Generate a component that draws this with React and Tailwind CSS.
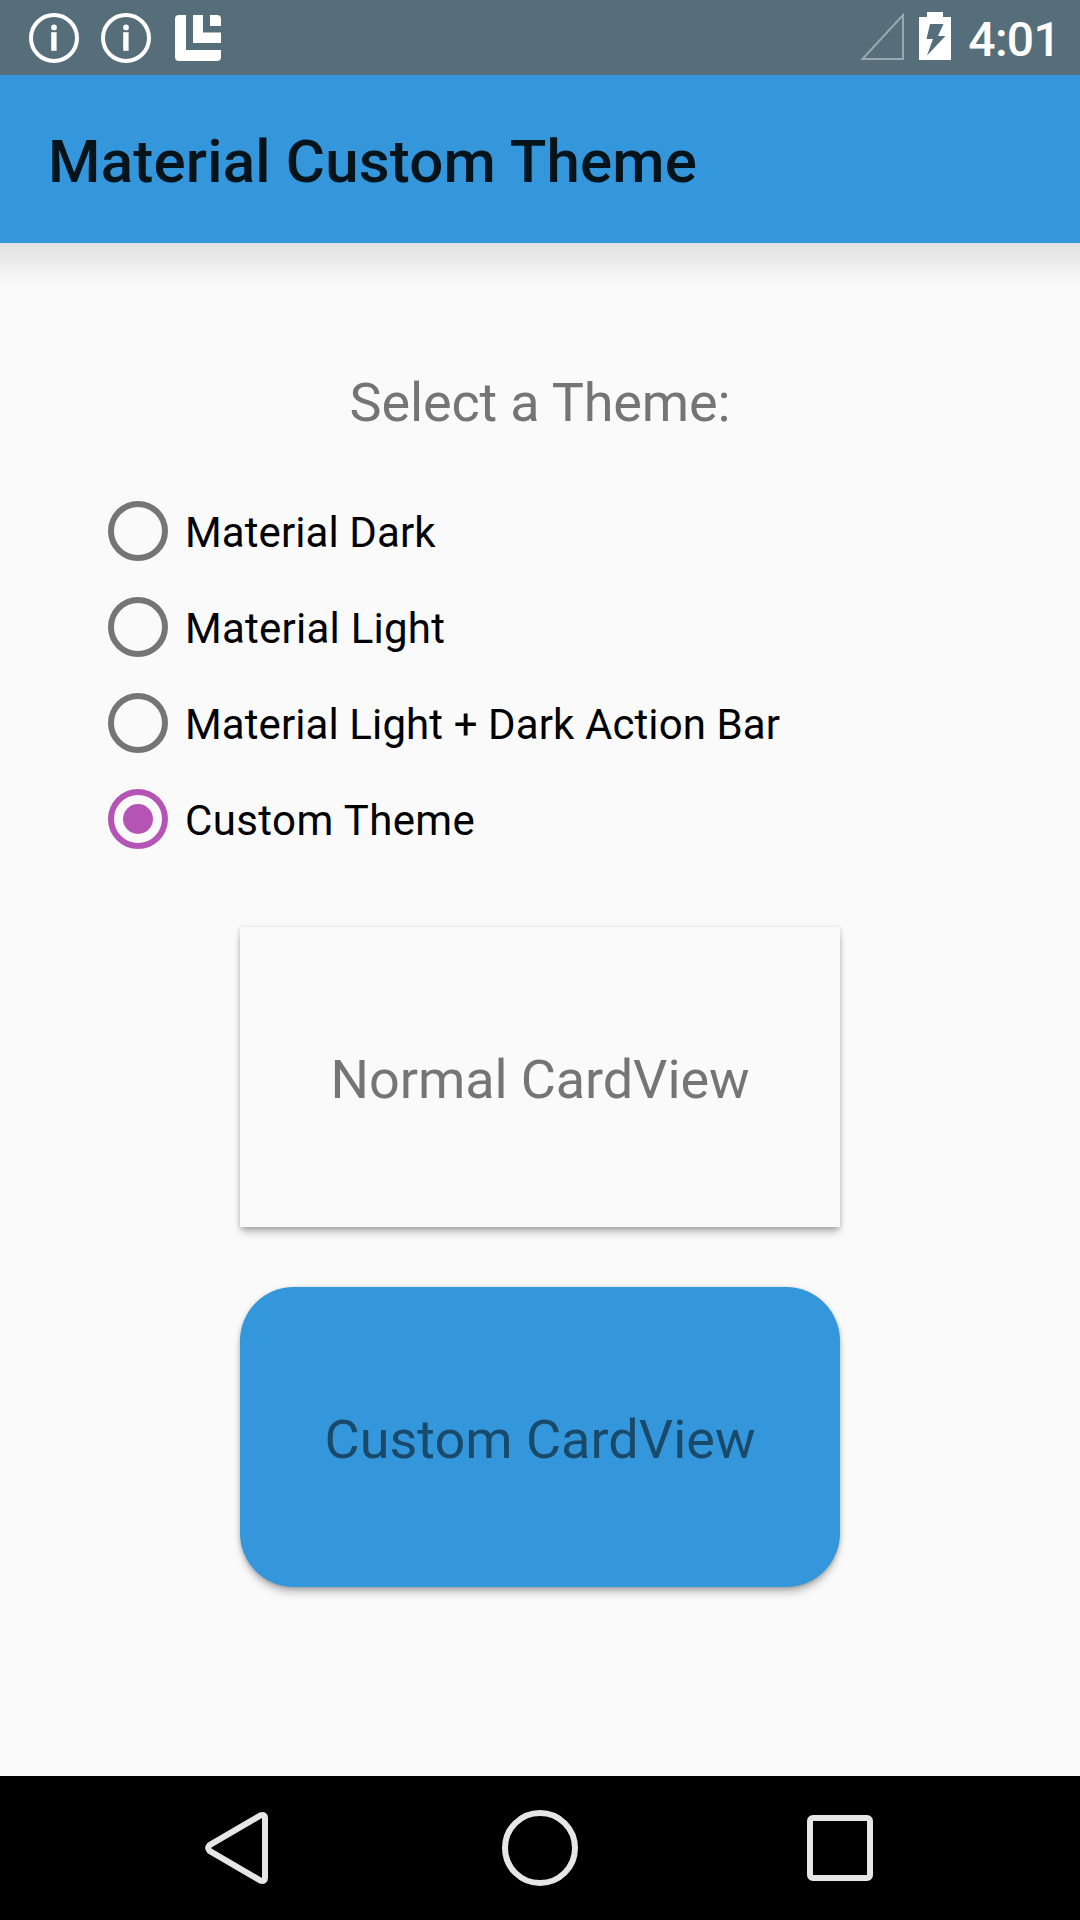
const options = [
  { label: 'Material Dark', tracking: 'tracking-[0.1px]', selected: false },
  { label: 'Material Light', tracking: 'tracking-[0.25px]', selected: false },
  { label: 'Material Light + Dark Action Bar', tracking: 'tracking-[0.1px]', selected: false },
  { label: 'Custom Theme', tracking: 'tracking-[0.4px]', selected: true },
];

function InfoIcon() {
  return (
    <svg className="h-[52px] w-[52px]" viewBox="0 0 52 52">
      <circle cx="26" cy="26" r="23" fill="none" stroke="#fff" strokeWidth="4" />
      <circle cx="26" cy="15.4" r="2.9" fill="#fff" />
      <rect x="23.2" y="20.2" width="5.4" height="18.6" fill="#fff" />
    </svg>
  );
}

function StatusBar() {
  return (
    <header className="flex h-[75px] shrink-0 items-center bg-[#566e79] pr-[20px] pl-[28px]">
      <div className="flex items-center gap-5">
        <InfoIcon />
        <InfoIcon />
      </div>
      <svg className="ml-[23px] h-[46px] w-[46px]" viewBox="0 0 46 46" fill="#fff">
        <path d="M4 0H11V35H46V42a4 4 0 0 1-4 4H4a4 4 0 0 1-4-4V4a4 4 0 0 1 4-4z" />
        <path d="M18 0H28V17.5H46V28H18z" />
        <path d="M35 0h7a4 4 0 0 1 4 4v7H35z" />
      </svg>
      <svg className="mb-[4px] ml-auto h-[48px] w-[44px]" viewBox="0 0 44 48">
        <path d="M2.5 47L43 3V47z" fill="none" stroke="#9aa8af" strokeWidth="2" />
      </svg>
      <svg className="mb-[3px] ml-[15px] h-[48px] w-[32px]" viewBox="0 0 32 48">
        <path
          d="M8 0H24V5H32V48H0V5H8zM11 12L7.5 27H14L8 43.5L26.5 24H19L24.5 12z"
          fill="#fff"
          fillRule="evenodd"
        />
      </svg>
      <span className="mt-[4px] ml-[17.5px] text-[48px] leading-none font-medium tracking-[-0.7px] text-white">4:01</span>
    </header>
  );
}

function Radio({ label, tracking, selected }) {
  return (
    <div role="radio" aria-checked={selected} className="flex h-24 items-center">
      <span
        className={
          selected
            ? 'flex size-[60px] items-center justify-center rounded-full border-[6px] border-[#b455b6]'
            : 'size-[60px] rounded-full border-[6px] border-[#757575]'
        }
      >
        {selected && <span className="size-[30px] rounded-full bg-[#b455b6]" />}
      </span>
      <span className={`mt-[3px] ml-[17px] text-[42px] leading-none text-black ${tracking}`}>{label}</span>
    </div>
  );
}

function NavBar() {
  return (
    <nav className="flex h-36 shrink-0 items-center justify-center bg-black">
      <div className="flex w-[300px] justify-center">
        <svg className="h-[80px] w-[80px]" viewBox="0 0 80 80" fill="none" stroke="#e6e6e6" strokeWidth="6" strokeLinejoin="round">
          <path d="M9.5 37.2Q7 40 9.5 42.8L60.5 72.6Q65 74 65 70V10Q65 6 60.5 7.4z" />
        </svg>
      </div>
      <div className="flex w-[300px] justify-center">
        <span className="size-[76px] rounded-full border-[6px] border-[#e6e6e6]" />
      </div>
      <div className="flex w-[300px] justify-center">
        <span className="size-[66px] rounded-[6px] border-[6px] border-[#e6e6e6]" />
      </div>
    </nav>
  );
}

export default function App() {
  return (
    <div className="flex h-[1920px] w-[1080px] flex-col bg-[#fafafa] font-[Roboto,sans-serif]">
      <StatusBar />
      <div className="flex h-[168px] shrink-0 items-center bg-[#3597db] pl-12">
        <h1 className="mt-[5px] text-[60px] leading-none font-medium tracking-[0.2px] text-[#05131b]">
          Material Custom Theme
        </h1>
      </div>
      <main className="flex flex-1 flex-col items-center">
        <div className="h-[43px] w-full shrink-0 bg-linear-to-b from-[#e0e0e0] via-[#efefef] via-55% to-[#fafafa]" />
        <p className="mt-[87px] text-[54px] leading-[60px] tracking-[-0.15px] text-[#757575]">Select a Theme:</p>
        <div role="radiogroup" className="mt-[50px] w-full pl-[108px]">
          {options.map((o) => (
            <Radio key={o.label} {...o} />
          ))}
        </div>
        <section className="mt-[60px] flex h-[300px] w-[600px] shrink-0 items-center justify-center bg-[#fafafa] shadow-[0_7px_8px_-2px_rgba(0,0,0,0.26),0_1px_5px_rgba(0,0,0,0.2)]">
          <p className="mt-[5px] text-[54px] leading-none tracking-[-0.1px] text-[#757575]">Normal CardView</p>
        </section>
        <section className="mt-[60px] flex h-[300px] w-[600px] shrink-0 items-center justify-center rounded-[54px] bg-[#3597db] shadow-[0_7px_8px_-2px_rgba(0,0,0,0.26),0_1px_5px_rgba(0,0,0,0.2)]">
          <p className="mt-[5px] text-[54px] leading-none text-[#1a4a6b]">Custom CardView</p>
        </section>
      </main>
      <NavBar />
    </div>
  );
}
